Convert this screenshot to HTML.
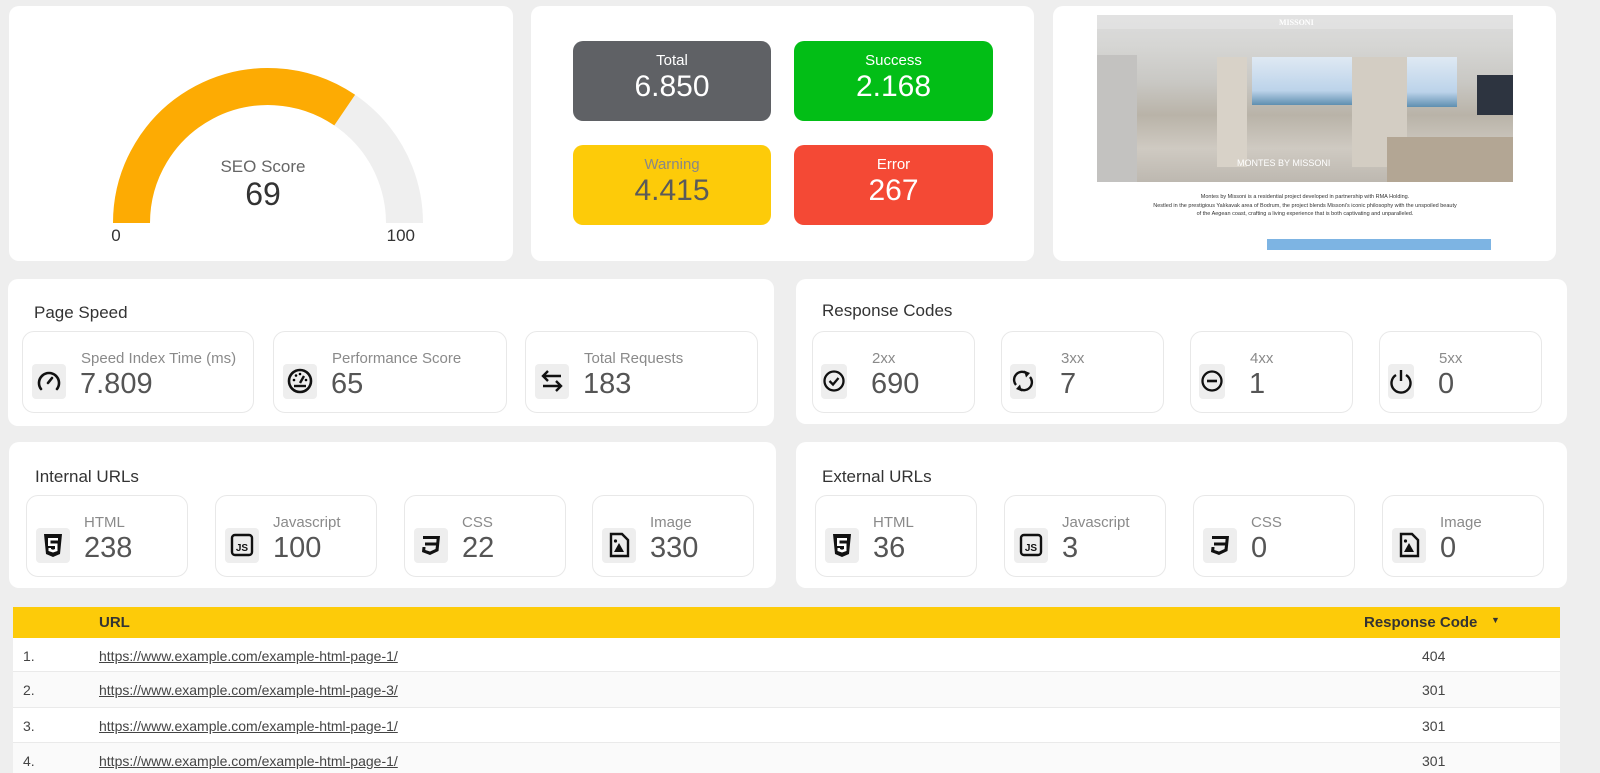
<!DOCTYPE html>
<html><head><meta charset="utf-8">
<style>
*{box-sizing:border-box;margin:0;padding:0}
body{width:1600px;height:770px;background:#eeeeee;font-family:"Liberation Sans",Arial,sans-serif;position:relative;overflow:hidden;color:#333}
.card{position:absolute;background:#fff;border-radius:10px}
.abs{position:absolute}
.stat{position:absolute;border-radius:10px;text-align:center;color:#fff}
.stat .l{font-size:15px;margin-top:11px}
.stat .v{font-size:30px;margin-top:1px}
.tile{position:absolute;border:1px solid #e8e8e8;border-radius:12px;background:#fff;height:82px}
.tile .ic{position:absolute;left:9px;top:32px;width:34px;height:35px;background:#eeeeee;border-radius:4px}
.tile .ic svg{position:absolute;left:2px;top:2px}
.tile .lb{position:absolute;top:18px;font-size:15px;color:#8a8a8a}
.tile .vl{position:absolute;top:36px;font-size:29px;color:#555}
.title{position:absolute;font-size:17px;color:#333}
.row{position:absolute;left:13px;width:1547px;font-size:14px;color:#444;border-bottom:1px solid #eaeaea}
.row span{position:absolute;top:10px}
.row u{color:#444}
</style></head><body>

<div class="card" style="left:9px;top:6px;width:504px;height:255px"></div>
<svg class="abs" style="left:0;top:0" width="520" height="260">
<path d="M131.5 223 A136.5 136.5 0 0 1 404.5 223" fill="none" stroke="#efefef" stroke-width="37"/>
<path d="M131.5 223 A136.5 136.5 0 0 1 344.7 110.1" fill="none" stroke="#fdab03" stroke-width="37"/>
<text x="263" y="172" font-size="17" fill="#666" text-anchor="middle" font-family="Liberation Sans">SEO Score</text>
<text x="263" y="205" font-size="32" fill="#333" text-anchor="middle" font-family="Liberation Sans">69</text>
<text x="116" y="241" font-size="17" fill="#333" text-anchor="middle" font-family="Liberation Sans">0</text>
<text x="415" y="241" font-size="17" fill="#333" text-anchor="end" font-family="Liberation Sans">100</text>
</svg>

<div class="card" style="left:531px;top:6px;width:503px;height:255px"></div>
<div class="stat" style="left:573px;top:41px;width:198px;height:80px;background:#5f6165"><div class="l">Total</div><div class="v">6.850</div></div>
<div class="stat" style="left:794px;top:41px;width:199px;height:80px;background:#02be16"><div class="l">Success</div><div class="v">2.168</div></div>
<div class="stat" style="left:573px;top:145px;width:198px;height:80px;background:#fdcb09;color:#5a5a5a"><div class="l" style="color:#888">Warning</div><div class="v">4.415</div></div>
<div class="stat" style="left:794px;top:145px;width:199px;height:80px;background:#f44935"><div class="l">Error</div><div class="v">267</div></div>

<div class="card" style="left:1053px;top:6px;width:503px;height:255px"></div>
<div class="abs" style="left:1097px;top:15px;width:416px;height:167px;background:linear-gradient(180deg,#dcdcdc 0%,#d6d6d4 18%,#c9c8c4 40%,#b9b3a8 60%,#cfcac2 80%,#bdb8b0 100%);overflow:hidden">
 <div class="abs" style="left:155px;top:42px;width:150px;height:48px;background:linear-gradient(180deg,#dfe9f3,#bcd3ea 70%,#5f8fb0)"></div>
 <div class="abs" style="left:310px;top:42px;width:50px;height:50px;background:linear-gradient(180deg,#dfe9f3,#bcd3ea 70%,#5f8fb0)"></div>
 <div class="abs" style="left:120px;top:42px;width:30px;height:110px;background:#d8d2c8"></div>
 <div class="abs" style="left:255px;top:42px;width:55px;height:110px;background:#d3cdc3"></div>
 <div class="abs" style="left:290px;top:122px;width:126px;height:45px;background:#b3a694"></div>
 <div class="abs" style="left:0;top:40px;width:40px;height:127px;background:#c3c2c0"></div>
 <div class="abs" style="left:380px;top:60px;width:36px;height:40px;background:#2d3440"></div>
 <div class="abs" style="left:0;top:0;width:416px;height:14px;background:rgba(230,230,230,.6)"></div>
 <div class="abs" style="left:182px;top:3px;font-size:8px;color:#fff;font-family:'Liberation Serif',serif;font-weight:bold">MISSONI</div>
 <div class="abs" style="left:140px;top:143px;font-size:9px;color:#fff">MONTES BY MISSONI</div>
</div>
<div class="abs" style="left:1110px;top:193px;width:390px;text-align:center;font-size:5.5px;line-height:8.5px;color:#333">Montes by Missoni is a residential project developed in partnership with RMA Holding.<br>Nestled in the prestigious Yalıkavak area of Bodrum, the project blends Missoni's iconic philosophy with the unspoiled beauty<br>of the Aegean coast, crafting a living experience that is both captivating and unparalleled.</div>
<div class="abs" style="left:1267px;top:239px;width:224px;height:11px;background:#7db4e3"></div>

<!-- Page Speed -->
<div class="card" style="left:8px;top:279px;width:766px;height:147px"></div>
<div class="title" style="left:34px;top:303px">Page Speed</div>
<div class="tile" style="left:22px;top:331px;width:232px"><div class="ic"><svg width="30" height="30" viewBox="0 0 30 30"><path d="M7 23 A10 10 0 1 1 23 23" fill="none" stroke="#111" stroke-width="2.6" stroke-linecap="round"/><path d="M14 17 L18 12" stroke="#111" stroke-width="2.6" stroke-linecap="round"/></svg></div><div class="lb" style="left:58px">Speed Index Time (ms)</div><div class="vl" style="left:57px">7.809</div></div>
<div class="tile" style="left:273px;top:331px;width:234px"><div class="ic"><svg width="30" height="30" viewBox="0 0 30 30"><circle cx="15" cy="15" r="11" fill="none" stroke="#111" stroke-width="2.6"/><path d="M15 17 L19 10" stroke="#111" stroke-width="2.4"/><circle cx="9" cy="14" r="1.3"/><circle cx="11" cy="9.5" r="1.3"/><circle cx="15" cy="8" r="1.3"/><circle cx="21" cy="14" r="1.3"/><path d="M9 20 H21" stroke="#111" stroke-width="2.4"/></svg></div><div class="lb" style="left:58px">Performance Score</div><div class="vl" style="left:57px">65</div></div>
<div class="tile" style="left:525px;top:331px;width:233px"><div class="ic"><svg width="30" height="30" viewBox="0 0 30 30"><path d="M24 10 H7 M11 5 L6 10 L11 15 M6 20 H23 M19 15 L24 20 L19 25" fill="none" stroke="#111" stroke-width="2.4"/></svg></div><div class="lb" style="left:58px">Total Requests</div><div class="vl" style="left:57px">183</div></div>

<!-- Response codes -->
<div class="card" style="left:796px;top:279px;width:771px;height:145px"></div>
<div class="title" style="left:822px;top:301px">Response Codes</div>
<div class="tile" style="left:812px;top:331px;width:163px"><div class="ic" style="left:8px;width:26px"><svg width="24" height="30" viewBox="0 0 24 30" style="left:1px"><circle cx="12" cy="15" r="9.5" fill="none" stroke="#111" stroke-width="2.3"/><path d="M7.5 15 L11 18.5 L16.5 12" fill="none" stroke="#111" stroke-width="2.3"/></svg></div><div class="lb" style="left:59px">2xx</div><div class="vl" style="left:58px">690</div></div>
<div class="tile" style="left:1001px;top:331px;width:163px"><div class="ic" style="left:8px;width:26px"><svg width="24" height="30" viewBox="0 0 24 30" style="left:1px"><path d="M5 19 A8 8 0 0 1 16 7.5 M19 11 A8 8 0 0 1 8 22.5" fill="none" stroke="#111" stroke-width="2.4"/><path d="M13 4.5 L19 7 L15 11.5Z M11 25.5 L5 23 L9 18.5Z" fill="#111"/></svg></div><div class="lb" style="left:59px">3xx</div><div class="vl" style="left:58px">7</div></div>
<div class="tile" style="left:1190px;top:331px;width:163px"><div class="ic" style="left:8px;width:26px"><svg width="24" height="30" viewBox="0 0 24 30" style="left:1px"><circle cx="12" cy="15" r="9.5" fill="none" stroke="#111" stroke-width="2.3"/><path d="M7 15 H17" stroke="#111" stroke-width="2.6"/></svg></div><div class="lb" style="left:59px">4xx</div><div class="vl" style="left:58px">1</div></div>
<div class="tile" style="left:1379px;top:331px;width:163px"><div class="ic" style="left:8px;width:26px"><svg width="24" height="30" viewBox="0 0 24 30" style="left:1px"><path d="M7 9 A9.5 9.5 0 1 0 17 9" fill="none" stroke="#111" stroke-width="2.4"/><path d="M12 4 V15" stroke="#111" stroke-width="2.4"/></svg></div><div class="lb" style="left:59px">5xx</div><div class="vl" style="left:58px">0</div></div>

<!-- Internal URLs -->
<div class="card" style="left:9px;top:442px;width:767px;height:146px"></div>
<div class="title" style="left:35px;top:467px">Internal URLs</div>
<!-- External -->
<div class="card" style="left:796px;top:442px;width:771px;height:146px"></div>
<div class="title" style="left:822px;top:467px">External URLs</div>

<svg width="0" height="0" style="position:absolute">
<defs>
<symbol id="h5" viewBox="0 0 30 30"><path d="M6 4 H24 L22 24 L15 27 L8 24Z" fill="#111"/><path d="M10 8 H20 V10.5 H12.5 V13.5 H19.5 V21 L15 22.5 L10.5 21 V18 H13 V19 L15 19.7 L17 19 V16 H10Z" fill="#fff"/></symbol>
<symbol id="js" viewBox="0 0 30 30"><rect x="5" y="5" width="20" height="20" rx="3" fill="none" stroke="#111" stroke-width="2.4"/><text x="15" y="21" font-size="10" font-weight="bold" text-anchor="middle" font-family="Liberation Sans" fill="#111">JS</text></symbol>
<symbol id="css" viewBox="0 0 30 30"><path d="M7 6 H24 L22.5 21 L14 25 L6 22 L6.5 17 H9.5 L9.3 20 L14 21.5 L19.5 19 L20 15.5 H9 V12.5 H20.3 L20.6 9 H7Z" fill="#111"/></symbol>
<symbol id="img" viewBox="0 0 30 30"><path d="M7 4 H18 L24 10 V26 H7Z" fill="none" stroke="#111" stroke-width="2.4"/><path d="M10 22 L15 13 L20 22Z" fill="#111"/><circle cx="11.5" cy="11" r="1.6" fill="#111"/></symbol>
</defs></svg>

<div class="tile" style="left:26px;top:495px;width:162px"><div class="ic"><svg width="30" height="30"><use href="#h5"/></svg></div><div class="lb" style="left:57px">HTML</div><div class="vl" style="left:57px">238</div></div>
<div class="tile" style="left:215px;top:495px;width:162px"><div class="ic"><svg width="30" height="30"><use href="#js"/></svg></div><div class="lb" style="left:57px">Javascript</div><div class="vl" style="left:57px">100</div></div>
<div class="tile" style="left:404px;top:495px;width:162px"><div class="ic"><svg width="30" height="30"><use href="#css"/></svg></div><div class="lb" style="left:57px">CSS</div><div class="vl" style="left:57px">22</div></div>
<div class="tile" style="left:592px;top:495px;width:162px"><div class="ic"><svg width="30" height="30"><use href="#img"/></svg></div><div class="lb" style="left:57px">Image</div><div class="vl" style="left:57px">330</div></div>

<div class="tile" style="left:815px;top:495px;width:162px"><div class="ic"><svg width="30" height="30"><use href="#h5"/></svg></div><div class="lb" style="left:57px">HTML</div><div class="vl" style="left:57px">36</div></div>
<div class="tile" style="left:1004px;top:495px;width:162px"><div class="ic"><svg width="30" height="30"><use href="#js"/></svg></div><div class="lb" style="left:57px">Javascript</div><div class="vl" style="left:57px">3</div></div>
<div class="tile" style="left:1193px;top:495px;width:162px"><div class="ic"><svg width="30" height="30"><use href="#css"/></svg></div><div class="lb" style="left:57px">CSS</div><div class="vl" style="left:57px">0</div></div>
<div class="tile" style="left:1382px;top:495px;width:162px"><div class="ic"><svg width="30" height="30"><use href="#img"/></svg></div><div class="lb" style="left:57px">Image</div><div class="vl" style="left:57px">0</div></div>

<!-- Table -->
<div class="abs" style="left:13px;top:607px;width:1547px;height:31px;background:#fdcb09;font-size:15px;font-weight:bold;color:#333">
 <span class="abs" style="left:86px;top:7px">URL</span>
 <span class="abs" style="left:1351px;top:7px">Response Code</span>
 <span class="abs" style="left:1478px;top:8px;font-size:9px">▼</span>
</div>
<div class="row" style="top:638px;height:34px;background:#fff"><span style="left:10px">1.</span><span style="left:86px"><u>https://www.example.com/example-html-page-1/</u></span><span style="left:1409px">404</span></div>
<div class="row" style="top:672px;height:36px;background:#fafafa"><span style="left:10px">2.</span><span style="left:86px"><u>https://www.example.com/example-html-page-3/</u></span><span style="left:1409px">301</span></div>
<div class="row" style="top:708px;height:35px;background:#fff"><span style="left:10px">3.</span><span style="left:86px"><u>https://www.example.com/example-html-page-1/</u></span><span style="left:1409px">301</span></div>
<div class="row" style="top:743px;height:30px;background:#fafafa;border:none"><span style="left:10px">4.</span><span style="left:86px"><u>https://www.example.com/example-html-page-1/</u></span><span style="left:1409px">301</span></div>
</body></html>
